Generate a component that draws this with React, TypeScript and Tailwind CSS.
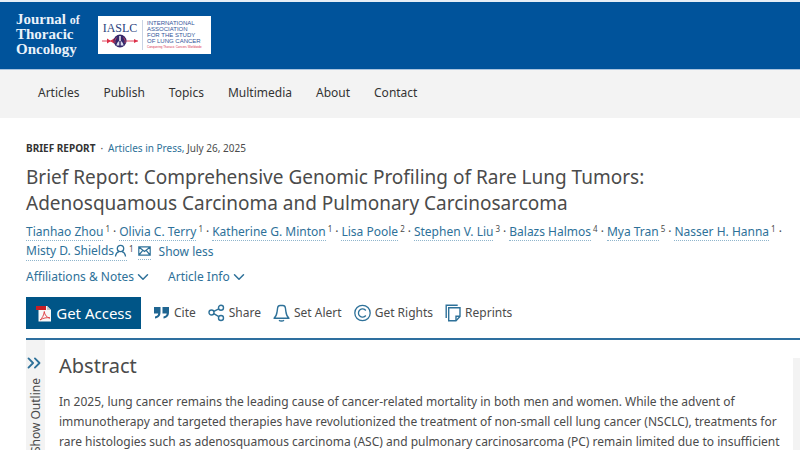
import React from 'react';
import { ChevronDown, ChevronsRight } from 'lucide-react';

const NAV_ITEMS = ['Articles', 'Publish', 'Topics', 'Multimedia', 'About', 'Contact'];

const AUTHORS = [
  { name: 'Tianhao Zhou', note: '1' },
  { name: 'Olivia C. Terry', note: '1' },
  { name: 'Katherine G. Minton', note: '1' },
  { name: 'Lisa Poole', note: '2' },
  { name: 'Stephen V. Liu', note: '3' },
  { name: 'Balazs Halmos', note: '4' },
  { name: 'Mya Tran', note: '5' },
  { name: 'Nasser H. Hanna', note: '1' },
];

export default function App() {
  return (
    <div className="h-screen overflow-hidden bg-white font-['Noto_Sans',sans-serif] text-[#4b4b4b]">
      <Header />
      <main className="pl-[26px]">
        <ArticleHead />
        <Toolbar />
        <ArticleBody />
      </main>
    </div>
  );
}

function Header() {
  return (
    <header>
      <div className="flex h-[70px] items-start gap-5 border-t-2 border-b border-t-[#e6eef6] border-b-[#a9c4df] bg-[#00539b] pl-4">
        <a href="#" className="mt-2.5 w-[62px] font-['Liberation_Serif',serif] text-[15px] leading-[15px] font-bold text-[#eaf2fa]">
          <span className="block whitespace-nowrap">
            Journal <span className="text-xs leading-3">of</span>
          </span>
          <span className="block">Thoracic</span>
          <span className="block">Oncology</span>
        </a>
        <a href="#" className="mt-3.5 flex h-[38px] w-[113px] items-center bg-white">
          <IaslcMark />
          <span className="ml-1 border-l border-[#c9d3e4] pl-1 font-['Liberation_Sans',sans-serif] text-[6px] leading-[6px] whitespace-nowrap text-[#34559a]">
            <span className="block">INTERNATIONAL</span>
            <span className="block">ASSOCIATION</span>
            <span className="block">FOR THE STUDY</span>
            <span className="block">OF LUNG CANCER</span>
            <span className="block text-[3px] text-[#d9304f]">Conquering Thoracic Cancers Worldwide</span>
          </span>
        </a>
      </div>
      <nav className="flex h-12 items-center gap-6 bg-[#f3f3f3] pb-0.5 pl-[38px] text-xs text-[#333]">
        {NAV_ITEMS.map((item) => (
          <a key={item} href="#">{item}</a>
        ))}
      </nav>
    </header>
  );
}

function IaslcMark() {
  return (
    <span className="flex w-10 flex-col items-center pl-1">
      <span className="font-['Liberation_Serif',serif] text-xs leading-3 text-[#2a3f7c]">IASLC</span>
      <svg width="36" height="14" viewBox="0 0 36 14" fill="none">
        <path d="M0 7h36" stroke="#e2475f" strokeWidth="1" />
        <path d="M5 4.500l4 2.500-4 2.500zM12 4.500L8 7l4 2.500z" fill="#dc3048" />
        <path d="M32 5l4 2-4 2z" fill="#dc3048" />
        <circle cx="18" cy="7" r="6.500" fill="#34286b" />
        <path d="M18 2v5" stroke="#fff" strokeWidth="1.400" />
        <path d="M17.300 7c-1.800 1-2.800 2.600-2.800 4.600h2.800zM18.700 7c1.800 1 2.800 2.600 2.800 4.600h-2.800z" fill="#d9dcec" />
        <path d="M14.500 3.500c-1.500 2-2 4-1.500 5.500M21.500 3.500c1.500 2 2 4 1.500 5.500" stroke="#c0405f" strokeWidth="1" />
      </svg>
    </span>
  );
}

function ArticleHead() {
  return (
    <section className="pt-5">
      <p className="text-[10px] leading-5">
        <strong className="font-bold text-[#333]">BRIEF REPORT</strong>
        <span className="mx-[5px]">·</span>
        <a href="#" className="text-[#2e7199]">Articles in Press,</a> July 26, 2025
      </p>
      <h1 className="mt-1.5 text-[19px] leading-[26px]">
        Brief Report: Comprehensive Genomic Profiling of Rare Lung Tumors:
        <br />
        Adenosquamous Carcinoma and Pulmonary Carcinosarcoma
      </h1>
      <div className="mt-1.5 text-xs leading-5 whitespace-nowrap text-[#2e7199]">
        {AUTHORS.map(({ name, note }) => (
          <React.Fragment key={name}>
            <a href="#" className="border-b border-dotted border-[#8fb5cc]">{name}</a>
            <Note>{note}</Note>
            <span className="mx-[3px] text-[#4b4b4b]">·</span>
          </React.Fragment>
        ))}
        <div className="flex">
          <a href="#" className="flex h-[19px] items-center border-b border-dotted border-[#8fb5cc]">
            Misty D. Shields <PersonIcon />
          </a>
          <span>
            <Note>1</Note>
          </span>
          <a href="#" aria-label="Email" className="ml-1 flex h-[18px] items-center border-b border-dotted border-[#8fb5cc]">
            <MailIcon />
          </a>
          <button type="button" className="ml-2">Show less</button>
        </div>
      </div>
      <div className="mt-[5px] flex gap-4 text-xs leading-5 text-[#2e7199]">
        <button type="button" className="flex items-center">
          Affiliations &amp; Notes <ChevronDown size={18} strokeWidth={2} />
        </button>
        <button type="button" className="flex items-center">
          Article Info <ChevronDown size={18} strokeWidth={2} />
        </button>
      </div>
    </section>
  );
}

function Note({ children }: { children: React.ReactNode }) {
  return <sup className="ml-0.5 text-[8px] text-[#4b4b4b]">{children}</sup>;
}

function Toolbar() {
  return (
    <div className="mt-2.5 flex items-center gap-3 border-b-2 border-[#2e6f9f] pb-[9px] text-xs">
      <button type="button" className="flex h-8 w-[115px] items-center justify-center gap-1 bg-[#005587] text-[15px] whitespace-nowrap text-white">
        <PdfIcon />
        Get Access
      </button>
      <Tool icon={<QuoteIcon />} label="Cite" />
      <Tool icon={<ShareIcon />} label="Share" />
      <Tool icon={<BellIcon />} label="Set Alert" />
      <Tool icon={<CopyrightIcon />} label="Get Rights" />
      <Tool icon={<ReprintsIcon />} label="Reprints" />
    </div>
  );
}

function Tool({ icon, label }: { icon: React.ReactNode; label: string }) {
  return (
    <button type="button" className="flex items-center gap-1 whitespace-nowrap">
      {icon}
      {label}
    </button>
  );
}

function ArticleBody() {
  return (
    <div className="flex">
      <button type="button" className="flex h-40 w-[19px] shrink-0 flex-col items-center bg-[#f3f3f3] pt-3">
        <ChevronsRight size={22} strokeWidth={2} className="-ml-1 shrink-0 text-[#2e7199]" />
        <span className="mt-1 rotate-180 text-xs whitespace-nowrap [writing-mode:vertical-rl]">Show Outline</span>
      </button>
      <article className="min-w-0 flex-1 pt-2.5 pl-3.5">
        <h2 className="text-[20px] leading-8">Abstract</h2>
        <p className="mt-2.5 text-xs leading-5 whitespace-nowrap">
          In 2025, lung cancer remains the leading cause of cancer-related mortality in both men and women. While the advent of
          <br />
          immunotherapy and targeted therapies have revolutionized the treatment of non-small cell lung cancer (NSCLC), treatments for
          <br />
          rare histologies such as adenosquamous carcinoma (ASC) and pulmonary carcinosarcoma (PC) remain limited due to insufficient
        </p>
      </article>
      <aside className="mt-[18px] h-36 w-[7px] shrink-0 bg-[#f3f3f3]" />
    </div>
  );
}

function PersonIcon() {
  return (
    <svg width="13" height="14" viewBox="0 0 13 14" fill="none" stroke="currentColor" strokeWidth="1.300">
      <circle cx="6.500" cy="4.500" r="3.200" />
      <path d="M1.500 12.500c.2-2.600 1.700-4.300 3.500-4.900M11.500 12.500c-.2-2.600-1.700-4.300-3.500-4.900" />
    </svg>
  );
}

function MailIcon() {
  return (
    <svg width="13" height="10" viewBox="0 0 13 10" fill="none" stroke="currentColor" strokeWidth="1.200">
      <path d="M.8.8h11.400v8.400H.8zM.8 1l5.700 4.500L12.200 1M1 9l3.600-4.300M12 9L8.400 4.700" />
    </svg>
  );
}

function PdfIcon() {
  return (
    <svg width="17" height="17" viewBox="0 0 17 17" fill="none">
      <path d="M3.500 1h8.500l4 4v11.500H3.500z" fill="#f8f8f8" />
      <path d="M12 1v4h4z" fill="#c9c9c9" />
      <path d="M1 1h10v4H1z" fill="#c61f26" />
      <path d="M5 15c2-1.500 4-5 4.300-8.500C9.700 10 11.500 12.500 15 13c-3-.8-7 0-10 2z" stroke="#e0454a" strokeWidth="1" />
    </svg>
  );
}

function QuoteIcon() {
  return (
    <svg width="17" height="16" viewBox="0 0 17 16" fill="#1f6591">
      <path d="M1 2h6.500v5c0 4-2 6-5.500 6.500v-2c2-.4 3-1.300 3.200-3H1zM9.500 2H16v5c0 4-2 6-5.500 6.500v-2c2-.4 3-1.300 3.200-3H9.500z" />
    </svg>
  );
}

function ShareIcon() {
  return (
    <svg width="17" height="18" viewBox="0 0 17 18" fill="none" stroke="#2e7199" strokeWidth="1.400">
      <circle cx="3.500" cy="8.500" r="2.500" />
      <circle cx="13" cy="3.700" r="2.500" />
      <circle cx="13" cy="14" r="2.500" />
      <path d="M5.800 7.400l5-2.600M5.800 9.700l5 3" />
    </svg>
  );
}

function BellIcon() {
  return (
    <svg width="17" height="18" viewBox="0 0 17 18" fill="none" stroke="#2e7199" strokeWidth="1.400">
      <path d="M1 14.200h15c-2-1.500-2.700-3.200-3.100-6.500L12.400 4c-.2-1.600-1-2.500-2.500-2.500H7.100C5.600 1.500 4.800 2.400 4.600 4l-.5 3.700C3.700 11 3 12.700 1 14.200z" strokeLinejoin="round" />
      <path d="M6 16.200c1.200 1 3.800 1 5 0" />
    </svg>
  );
}

function CopyrightIcon() {
  return (
    <svg width="17" height="18" viewBox="0 0 17 18" fill="none" stroke="#2e7199" strokeWidth="1.300">
      <circle cx="8.500" cy="9" r="7.700" />
      <path d="M11.800 6.500a4.100 4.100 0 1 0 0 5" />
    </svg>
  );
}

function ReprintsIcon() {
  return (
    <svg width="16" height="18" viewBox="0 0 16 18" fill="none" stroke="#2e7199" strokeWidth="1.400">
      <path d="M3.700 3.700H15v8.800L11 16.700H3.700z" />
      <path d="M15 12.300h-4v4.200M1.200 14V1.200h11.500" />
    </svg>
  );
}
